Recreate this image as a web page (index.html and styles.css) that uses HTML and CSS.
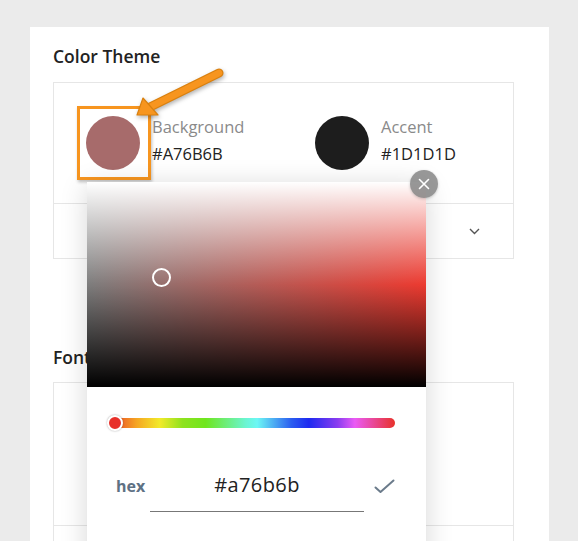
FILE: index.html
```html
<!DOCTYPE html>
<html>
<head>
<meta charset="utf-8">
<link rel="stylesheet" href="styles.css">
</head>
<body>
<div class="page">
  <div class="card">
    <h2 class="section-title">Color Theme</h2>
    <div class="box">
      <div class="color-row">
        <div class="color-item">
          <div class="swatch swatch-bg"></div>
          <div class="color-text">
            <div class="color-label">Background</div>
            <div class="color-value">#A76B6B</div>
          </div>
        </div>
        <div class="color-item">
          <div class="swatch swatch-accent"></div>
          <div class="color-text">
            <div class="color-label">Accent</div>
            <div class="color-value">#1D1D1D</div>
          </div>
        </div>
      </div>
      <div class="select-row">
        <svg class="chevron" width="11" height="7" viewBox="0 0 11 7"><polyline points="1,1 5.5,5.5 10,1" fill="none" stroke="#555" stroke-width="1.4"/></svg>
      </div>
    </div>
    <h2 class="section-title font-title">Font</h2>
    <div class="box box-font">
      <div class="font-row"></div>
      <div class="font-row"></div>
    </div>
  </div>

  <div class="highlight"></div>

  <svg class="arrow" width="110" height="80" viewBox="0 0 110 80">
    <g transform="translate(-130,-60)">
      <line x1="219" y1="73" x2="150" y2="107" stroke="#d9800f" stroke-width="9" stroke-linecap="round"/>
      <line x1="219" y1="73" x2="150" y2="107" stroke="#f7951f" stroke-width="6.5" stroke-linecap="round"/>
      <polygon points="137,115 143,98 158,115" fill="#f7951f" stroke="#d9800f" stroke-width="1.2" stroke-linejoin="round"/>
    </g>
  </svg>

  <div class="picker">
    <div class="sv">
      <div class="sv-pointer"></div>
    </div>
    <div class="hue">
      <div class="hue-thumb"></div>
    </div>
    <div class="hex-row">
      <span class="hex-label">hex</span>
      <div class="hex-input">#a76b6b</div>
      <svg class="check" width="21" height="15" viewBox="0 0 21 15"><polyline points="1.5,8.5 6.5,13 19.5,1.5" fill="none" stroke="#6b7b8b" stroke-width="2" stroke-linecap="round" stroke-linejoin="round"/></svg>
    </div>
  </div>

  <div class="close-btn">
    <svg width="12" height="12" viewBox="0 0 12 12"><path d="M1.5 1.5 L10.5 10.5 M10.5 1.5 L1.5 10.5" stroke="#fff" stroke-width="1.6" stroke-linecap="round"/></svg>
  </div>
</div>
</body>
</html>
```

FILE: styles.css
```css
* { box-sizing: border-box; }
html, body {
  margin: 0;
  padding: 0;
  width: 578px;
  height: 541px;
  overflow: hidden;
  background: #ebebeb;
  font-family: "Open Sans", "Liberation Sans", sans-serif;
}
.page {
  position: relative;
  width: 578px;
  height: 541px;
  padding: 27px 0 0 30px;
}
.card {
  width: 519px;
  height: 514px;
  background: #fff;
  padding: 17px 35px 0 23px;
}
.section-title {
  margin: 0;
  font-size: 17.5px;
  line-height: 24px;
  font-weight: 600;
  color: #222;
}
.box {
  margin-top: 14px;
  border: 1px solid #e6e6e6;
}
.color-row {
  height: 121px;
  display: flex;
  padding: 33px 0 0 32px;
  border-bottom: 1px solid #e6e6e6;
}
.color-item {
  flex: none;
  width: 229px;
  display: flex;
  align-items: flex-start;
}
.swatch {
  width: 54px;
  height: 54px;
  border-radius: 50%;
  flex: none;
}
.swatch-bg { background: #a76b6b; }
.swatch-accent { background: #1d1d1d; }
.color-text {
  margin-left: 12px;
}
.color-label {
  font-size: 16.5px;
  line-height: 22px;
  color: #8a8a8a;
}
.color-value {
  font-size: 16.5px;
  line-height: 32px;
  color: #222;
}
.select-row {
  height: 54px;
  display: flex;
  align-items: center;
  justify-content: flex-end;
  padding-right: 33px;
}
.font-title {
  margin-top: 86px;
}
.box-font {
  margin-top: 13px;
}
.font-row {
  height: 143px;
  border-bottom: 1px solid #e6e6e6;
}
.highlight {
  position: absolute;
  left: 77px;
  top: 106px;
  width: 74px;
  height: 74px;
  border: 3px solid #f7951f;
  box-shadow: 1px 2px 3px rgba(0,0,0,0.25);
}
.arrow {
  position: absolute;
  left: 130px;
  top: 60px;
  filter: drop-shadow(1px 2px 2px rgba(0,0,0,0.3));
}
.picker {
  position: absolute;
  left: 87px;
  top: 182px;
  width: 339px;
  height: 400px;
  background: #fff;
  box-shadow: 0 4px 26px rgba(0,0,0,0.16);
}
.sv {
  position: relative;
  height: 205px;
  background:
    linear-gradient(to bottom, #fff 0%, rgba(255,255,255,0) 50%, rgba(0,0,0,0) 50%, #000 100%),
    linear-gradient(to right, #7d7d7d, #ec3a30);
}
.sv-pointer {
  position: absolute;
  left: 65px;
  top: 86px;
  width: 19px;
  height: 19px;
  border-radius: 50%;
  border: 2px solid #fff;
}
.hue {
  position: relative;
  margin: 31px 0 0 21px;
  width: 287px;
  height: 10px;
  border-radius: 5px;
  background: linear-gradient(to right, #e8322a 0%, #f5a623 10%, #f2ea2a 18%, #8ee21e 26%, #6fe61e 34%, #6bf5d2 48%, #6cf7f5 52%, #2a5cf0 64%, #1e2af0 70%, #8a3cf0 80%, #ea5af5 86%, #e8322a 100%);
}
.hue-thumb {
  position: absolute;
  left: -1px;
  top: -3px;
  width: 16px;
  height: 16px;
  border-radius: 50%;
  background: #e8302a;
  border: 2px solid #fff;
  box-shadow: 0 0 2px rgba(0,0,0,0.35);
}
.hex-row {
  display: flex;
  align-items: center;
  margin-top: 38px;
  padding-left: 29px;
}
.hex-label {
  width: 34px;
  margin-bottom: 6px;
  font-size: 16px;
  font-weight: 700;
  color: #5e7184;
}
.hex-input {
  width: 214px;
  height: 46px;
  line-height: 38px;
  text-align: center;
  font-size: 20px;
  letter-spacing: 0.4px;
  color: #222;
  border-bottom: 1px solid #777;
}
.check {
  margin-left: 10px;
  margin-bottom: 6px;
}
.close-btn {
  position: absolute;
  left: 410px;
  top: 170px;
  width: 28px;
  height: 28px;
  border-radius: 50%;
  background: rgba(128,128,128,0.82);
  display: flex;
  align-items: center;
  justify-content: center;
  box-shadow: 0 1px 3px rgba(0,0,0,0.2);
}
```
